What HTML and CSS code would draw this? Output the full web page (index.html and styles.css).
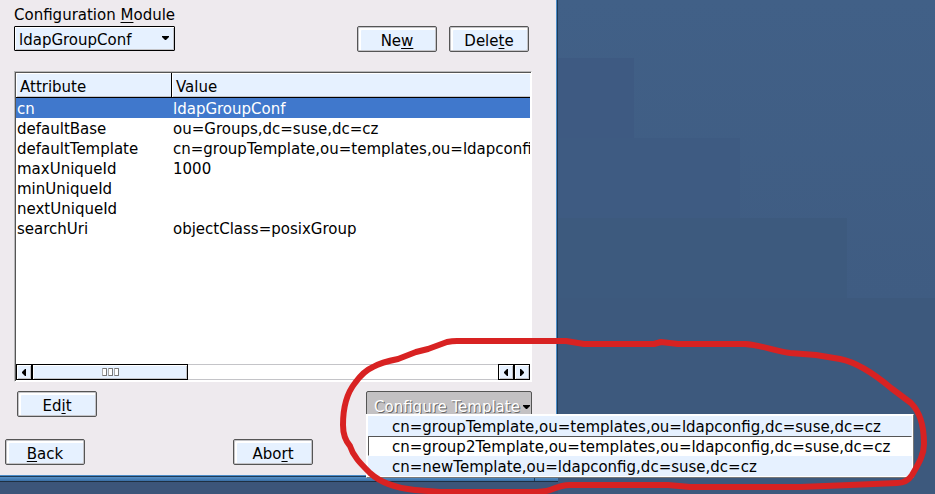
FILE: index.html
```html
<!DOCTYPE html>
<html lang="en">
<head>
<meta charset="utf-8">
<title>Configuration Module</title>
<link rel="stylesheet" href="styles.css">
</head>
<body>
<main class="window">
  <div class="content">
    <label class="module-label" for="module">Configuration <u>M</u>odule</label>
    <div class="module-row">
      <div class="combo">
        <select id="module"><option>ldapGroupConf</option></select>
        <svg class="combo-arrow" width="7" height="4" viewBox="0 0 7 4"><path d="M0 0H7V1L4 4H3L0 1Z"/></svg>
      </div>
      <div class="button-group">
        <button class="btn" type="button">Ne<u>w</u></button>
        <button class="btn" type="button">Dele<u>t</u>e</button>
      </div>
    </div>

    <div class="list">
      <table>
        <colgroup><col class="col-attribute"><col></colgroup>
        <thead><tr><th scope="col">Attribute</th><th scope="col">Value</th></tr></thead>
        <tbody>
          <tr class="selected"><td>cn</td><td>ldapGroupConf</td></tr>
          <tr><td>defaultBase</td><td>ou=Groups,dc=suse,dc=cz</td></tr>
          <tr><td>defaultTemplate</td><td>cn=groupTemplate,ou=templates,ou=ldapconfi</td></tr>
          <tr><td>maxUniqueId</td><td>1000</td></tr>
          <tr><td>minUniqueId</td><td></td></tr>
          <tr><td>nextUniqueId</td><td></td></tr>
          <tr><td>searchUri</td><td>objectClass=posixGroup</td></tr>
        </tbody>
      </table>
      <div class="scrollbar">
        <button class="scroll-btn" type="button" aria-label="Scroll left"><svg width="4" height="7" viewBox="0 0 4 7"><path d="M4 0V7H3L0 4V3L3 0Z"/></svg></button>
        <div class="thumb"><i></i><i></i><i></i></div>
        <div class="track"></div>
        <button class="scroll-btn" type="button" aria-label="Scroll left"><svg width="4" height="7" viewBox="0 0 4 7"><path d="M4 0V7H3L0 4V3L3 0Z"/></svg></button>
        <button class="scroll-btn" type="button" aria-label="Scroll right"><svg width="4" height="7" viewBox="0 0 4 7"><path d="M0 0V7H1L4 4V3L1 0Z"/></svg></button>
      </div>
    </div>

    <div class="action-row">
      <button class="btn" type="button">Ed<u>i</u>t</button>
      <div class="configure">
        <button class="configure-btn" type="button" aria-haspopup="menu" aria-expanded="true"><span><u>C</u>onfigure Template</span><svg width="7" height="4" viewBox="0 0 7 4"><path d="M0 0H7V1L4 4H3L0 1Z"/></svg></button>
        <div class="menu" role="menu">
          <button type="button" role="menuitem">cn=groupTemplate,ou=templates,ou=ldapconfig,dc=suse,dc=cz</button>
          <button class="active" type="button" role="menuitem">cn=group2Template,ou=templates,ou=ldapconfig,dc=suse,dc=cz</button>
          <button type="button" role="menuitem">cn=newTemplate,ou=ldapconfig,dc=suse,dc=cz</button>
        </div>
        <svg class="marker" width="599" height="160" viewBox="336 334 599 160" aria-hidden="true">
          <path d="M373 367C380 363 388 361 398 359L416 352L428 349L447 342Q452 341 457 341H566L584 344H654L661 342L678 344H745C760 345 772 350 790 353L816 355L840 359C860 363 878 377 891 388L911 403C920 412 924 428 924 444C924 456 917 466 912 475Q907 483 897 483L850 485L800 487H690L668 485H570Q562 485 550 490Q545 492 530 492H440L415 490C395 488 381 483 370 473C360 463 353 456 350 446C344 439 343 432 343 425C343 408 347 393 355 383C360 376 366 370 373 367Z"/>
        </svg>
      </div>
    </div>

    <div class="wizard-row">
      <button class="btn" type="button"><u>B</u>ack</button>
      <button class="btn" type="button">Abo<u>r</u>t</button>
      <span></span>
    </div>
  </div>
  <div class="frame-bottom"><span class="grip"></span></div>
</main>
<div class="desktop"></div>
</body>
</html>
```
FILE: styles.css
```css
* {
  box-sizing: border-box;
}

body {
  margin: 0;
  min-height: 100vh;
  display: grid;
  grid-template-columns: minmax(0, 558fr) 377fr;
  padding-bottom: 12px;
  overflow: hidden;
  font-family: "DejaVu Sans", sans-serif;
  font-size: 15px;
  line-height: 20px;
  color: #000;
  background-color: #3c5579;
}

.desktop {
  margin-bottom: -12px;
  background:
    linear-gradient(#3e5a82, #3e5a82) 0 58px / 76px 80px no-repeat,
    linear-gradient(#3e5b82, #3e5b82) 0 138px / 182px 80px no-repeat,
    linear-gradient(#3d5a7e, #3d5a7e) 0 218px / 289px 80px no-repeat,
    linear-gradient(#3d597d, #3d597d) 0 298px / 100% 100% no-repeat,
    linear-gradient(#416087, #3f5c82 300px);
}

button,
select {
  font: inherit;
  color: inherit;
  margin: 0;
}

u {
  text-decoration: underline;
  text-underline-offset: 2px;
  text-decoration-skip-ink: none;
}

.window {
  display: flex;
  flex-direction: column;
  min-width: 0;
}

.content {
  flex: 1;
  display: flex;
  flex-direction: column;
  padding: 5px 25px 10px 14px;
  background: #eeeaee;
  border-right: 1px solid #1f3c58;
  box-shadow: inset -1px 0 #4b8cc8;
}

.module-label {
  margin-bottom: 1px;
}

.module-row {
  display: flex;
  justify-content: space-between;
  align-items: flex-start;
  padding-right: 3px;
  margin-bottom: 19px;
}

.combo {
  position: relative;
  width: 161px;
}

.combo select {
  display: block;
  appearance: none;
  width: 100%;
  height: 25px;
  padding: 3px 4px 0;
  border: 1px solid #000;
  border-radius: 1px;
  background: #e6f1ff;
  box-shadow: inset 1px 1px #fff, inset -1px -1px #c4c4c8;
}

.combo-arrow {
  position: absolute;
  right: 6px;
  top: 10px;
  pointer-events: none;
}

.button-group {
  display: flex;
  gap: 12px;
}

.btn {
  width: 80px;
  height: 26px;
  padding: 3px 0 0;
  border: 1px solid #555;
  border-radius: 2px;
  background: #e6f1ff;
  box-shadow: inset 1px 1px #c4c4c8, inset -1px -1px #c4c4c8, inset 3px 3px #fff;
}

.list {
  flex: 1;
  display: flex;
  flex-direction: column;
  justify-content: space-between;
  margin-bottom: 9px;
  border: 1px solid;
  border-color: #b8b8ba #fff #fff #b8b8ba;
  padding: 1px;
  background: #fff;
  box-shadow: inset 1px 1px #555;
}

table {
  width: 100%;
  table-layout: fixed;
  border-collapse: separate;
  border-spacing: 0;
}

.col-attribute {
  width: 156px;
}

th {
  height: 25px;
  padding: 3px 4px 0;
  text-align: left;
  font-weight: normal;
  background: #e6f1ff;
  border-bottom: 1px solid #000;
  box-shadow: inset 1px 1px #fff, inset 0 -1px #c4c4c8;
}

th:first-child {
  border-right: 1px solid #000;
}

td {
  height: 20px;
  padding: 2px 0 0 1px;
  line-height: 18px;
  white-space: nowrap;
  overflow: hidden;
}

.selected {
  color: #fff;
  background: #4078cc;
}

.scrollbar {
  display: flex;
  height: 16px;
}

.scroll-btn {
  display: grid;
  place-items: center;
  width: 16px;
  padding: 0;
  border: 1px solid #000;
  background: #e6f1ff;
  box-shadow: inset 1px 1px #fff, inset -1px -1px #c4c4c8;
}

.thumb {
  display: flex;
  align-items: center;
  justify-content: center;
  gap: 1px;
  width: 156px;
  border: 1px solid #000;
  background: #e6f1ff;
  box-shadow: inset 1px 1px #fff, inset -1px -1px #c4c4c8;
}

.thumb i {
  width: 5px;
  height: 8px;
  border: 1px solid #777;
  border-left-color: #aaa;
  border-radius: 1px;
  background: #fff;
}

.track {
  flex: 1;
  border: solid #c4c4c8;
  border-width: 1px 0;
}

.action-row {
  display: flex;
  justify-content: space-between;
  padding-left: 3px;
  margin-bottom: 22px;
}

.configure {
  position: relative;
}

.configure-btn {
  display: flex;
  align-items: center;
  justify-content: space-between;
  width: 166px;
  height: 26px;
  padding: 5px 1px 0 7px;
  border: 1px solid #555;
  border-radius: 2px;
  background: #c3c1c3;
  color: #fff;
  text-shadow: 1px 1px #666;
  white-space: nowrap;
}

.menu {
  position: absolute;
  z-index: 1;
  left: 0;
  top: 23px;
  display: flex;
  flex-direction: column;
  padding: 1px;
  border: 1px solid;
  border-color: #fff #777 #777 #fff;
  background: #fff;
}

.menu button {
  height: 20px;
  padding: 2px 21px 0 23px;
  border: 1px solid #e6f1ff;
  background: #e6f1ff;
  line-height: 16px;
  text-align: left;
  white-space: nowrap;
}

.menu .active {
  background: #fff;
  border-color: #555 #fff #fff #555;
}

.marker {
  position: absolute;
  z-index: 2;
  left: -30px;
  top: -57px;
  pointer-events: none;
}

.marker path {
  fill: none;
  stroke: #d82222;
  stroke-width: 6;
  stroke-linejoin: round;
}

.wizard-row {
  display: flex;
  justify-content: space-between;
  margin: 0 -9px;
}

.wizard-row span {
  width: 80px;
}

.frame-bottom {
  display: flex;
  justify-content: flex-end;
  height: 7px;
  border-top: 1px solid #4b8cc8;
  border-bottom: 1px solid #1f3042;
  background: linear-gradient(#1f3c58 1px, #5590c8 1px, #3a6ea4);
}

.grip {
  width: 24px;
  border-left: 1px solid #1f3c58;
}
```
